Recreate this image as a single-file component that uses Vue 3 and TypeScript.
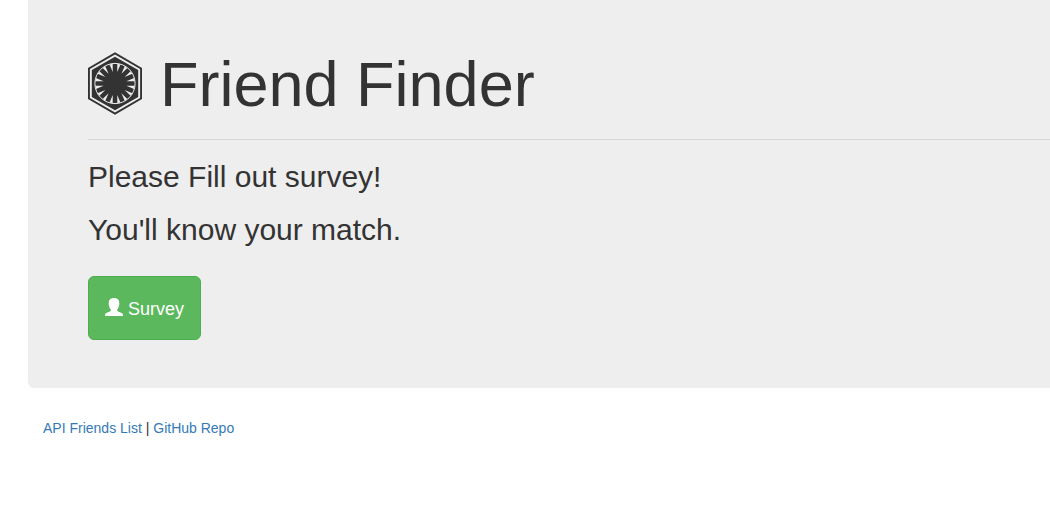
<script setup lang="ts">
interface FooterLink {
  label: string
  href: string
}

const prompts: string[] = ['Please Fill out survey!', "You'll know your match."]
const api: FooterLink = { label: 'API Friends List', href: '#api' }
const repo: FooterLink = { label: 'GitHub Repo', href: '#repo' }

// Light wedges between the sixteen rays of the emblem
const wedgeAngles: number[] = Array.from({ length: 16 }, (_, i) => 11.25 + i * 22.5)
</script>

<template>
  <div class="page">
    <main class="jumbotron">
      <h1 class="title">
        <svg class="emblem" viewBox="-27 -31.5 54 64" aria-hidden="true">
          <polygon class="dark" points="0,-31.2 27,-15.6 27,15.6 0,31.2 -27,15.6 -27,-15.6" />
          <polygon class="light" points="0,-29 25.1,-14.5 25.1,14.5 0,29 -25.1,14.5 -25.1,-14.5" />
          <polygon class="dark" points="0,-26.8 23.2,-13.4 23.2,13.4 0,26.8 -23.2,13.4 -23.2,-13.4" />
          <circle class="ring" r="20.1" />
          <path
            v-for="angle in wedgeAngles"
            :key="angle"
            class="light"
            d="M0-11.6L-1.6-19.8H1.6Z"
            :transform="`rotate(${angle})`"
          />
        </svg>
        <span>Friend Finder</span>
      </h1>
      <hr class="rule" />
      <h2 v-for="line in prompts" :key="line" class="prompt">{{ line }}</h2>
      <button type="button" class="survey">
        <svg class="user" viewBox="0 0 18 18" aria-hidden="true">
          <path d="M9 0C5.600 0 3.800 1.600 3.800 4.300C3.800 5.300 3.600 5.600 3.700 6.500C3.800 7.300 4.100 7.500 4.200 8.200C4.500 9.900 5.100 10.900 5.900 11.700V12.300C5.900 12.900 5.500 13.200 4.900 13.500L1.400 14.900C.4 15.300 0 16 0 18H18C18 16 17.600 15.300 16.600 14.900L13.100 13.500C12.500 13.200 12.100 12.900 12.100 12.300V11.700C12.900 10.900 13.500 9.900 13.800 8.200C13.900 7.500 14.200 7.300 14.300 6.500C14.400 5.600 14.200 5.300 14.200 4.300C14.200 1.600 12.400 0 9 0Z" />
        </svg>
        <span>Survey</span>
      </button>
    </main>
    <footer class="footer">
      <a :href="api.href">{{ api.label }}</a> | <a :href="repo.href">{{ repo.label }}</a>
    </footer>
  </div>
</template>

<style>
body {
  margin: 0;
  background: #fff;
}
</style>

<style scoped>
.page {
  padding-left: 28px;
  color: #333;
  font-family: "Liberation Sans", Arial, sans-serif;
  font-size: 14px;
  line-height: 20px;
}

.jumbotron {
  padding: 50px 0 48px 60px;
  background: #eee;
  border-radius: 0 0 0 6px;
}

.title {
  display: flex;
  align-items: flex-start;
  gap: 18px;
  margin: 0;
  font-size: 63px;
  font-weight: 500;
  line-height: 69px;
}

.emblem {
  flex: none;
  width: 54px;
  height: 64px;
  margin-top: 2px;
}

.dark {
  fill: #333;
}

.light {
  fill: #eee;
}

.ring {
  fill: none;
  stroke: #eee;
  stroke-width: 1;
}

.rule {
  height: 1px;
  margin: 20px 0;
  border: 0;
  background: #d5d5d5;
}

.prompt {
  margin: 0 0 20px;
  font-size: 30px;
  font-weight: 500;
  line-height: 33px;
}

.survey {
  display: flex;
  align-items: flex-start;
  gap: 5px;
  margin-top: 30px;
  padding: 20px 16px 18px;
  border: 1px solid #4cae4c;
  border-radius: 6px;
  background: #5cb85c;
  color: #fff;
  font-family: inherit;
  font-size: 18px;
  line-height: 24px;
  cursor: pointer;
}

.user {
  width: 18px;
  height: 18px;
  margin-top: 1px;
  fill: #fff;
}

.footer {
  padding: 30px 15px;
}

.footer a {
  color: #337ab7;
  text-decoration: none;
}
</style>
